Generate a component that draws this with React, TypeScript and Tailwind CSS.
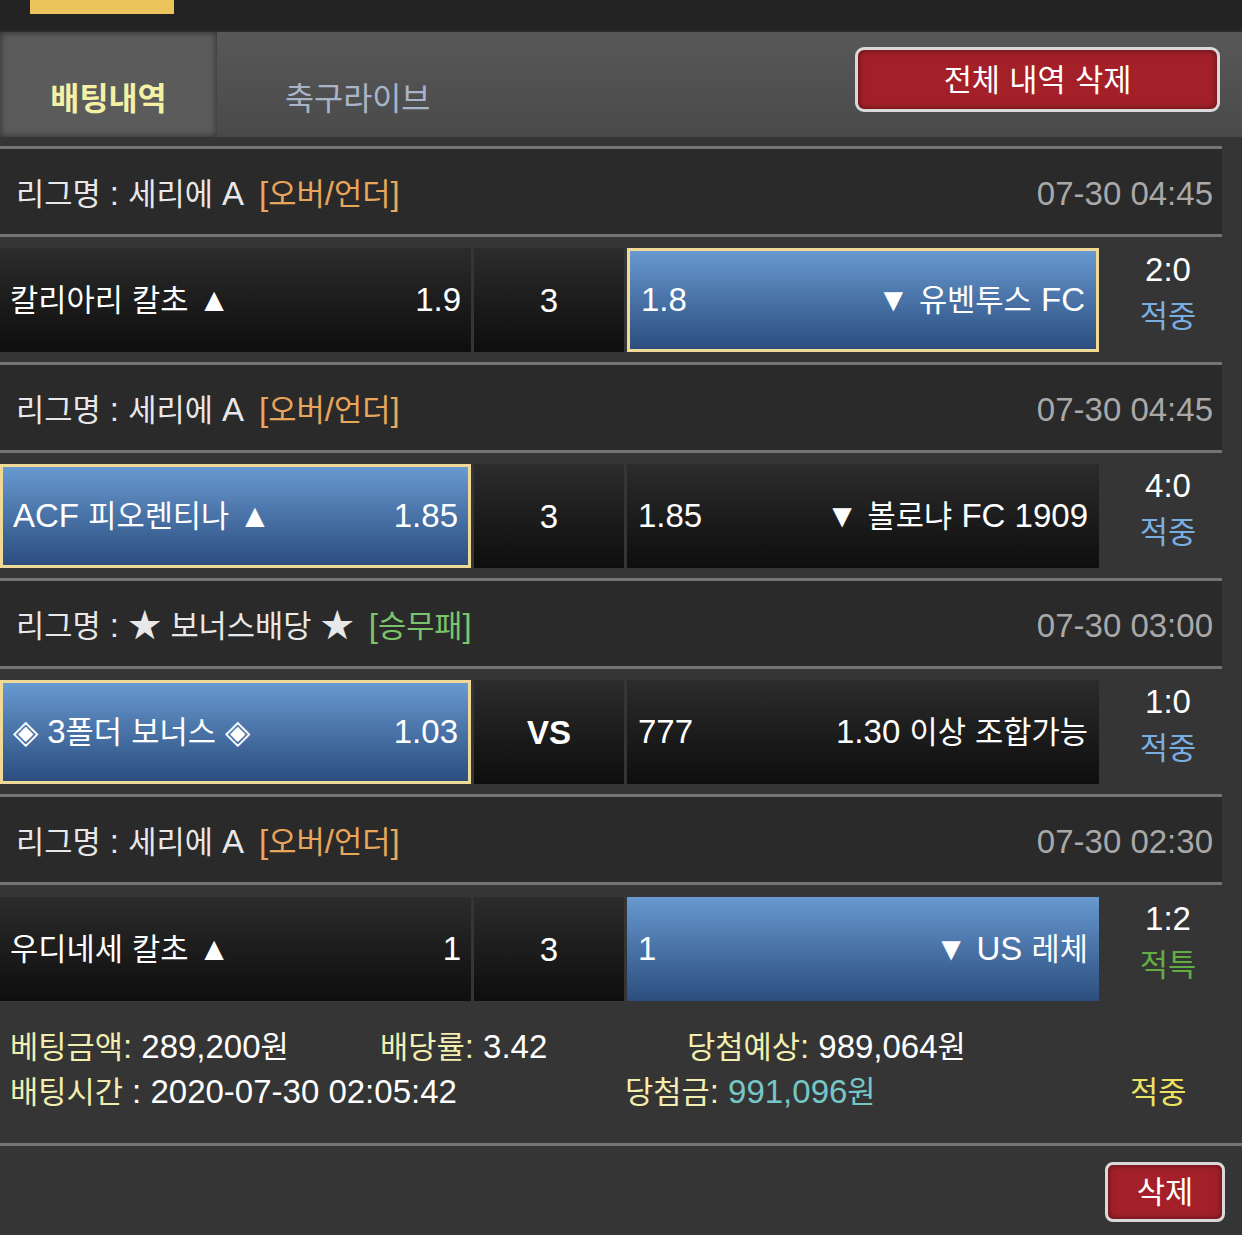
import React from "react";

const HANGUL = /([\uac00-\ud7a3]+)/;

// hangul runs get a slightly smaller size so they sit like the original system font
function T({ children }: { children: string }) {
    return (
        <span>
            {children.split(HANGUL).map((p, i) =>
                i % 2 === 1 ? <span key={i} className="text-[0.93em]">{p}</span> : <React.Fragment key={i}>{p}</React.Fragment>
            )}
        </span>
    );
}

type Bet = {
    league: string;
    tag: string;
    tagGreen?: boolean;
    time: string;
    home: string;
    homeOdds: string;
    draw: string;
    away: string;
    awayOdds: string;
    pick: "home" | "away";
    framed: boolean;
    score: string;
    result: string;
    resultGreen?: boolean;
};

const bets: Bet[] = [
    { league: "리그명 : 세리에 A", tag: "[오버/언더]", time: "07-30 04:45", home: "칼리아리 칼초 ▲", homeOdds: "1.9", draw: "3", away: "▼ 유벤투스 FC", awayOdds: "1.8", pick: "away", framed: true, score: "2:0", result: "적중" },
    { league: "리그명 : 세리에 A", tag: "[오버/언더]", time: "07-30 04:45", home: "ACF 피오렌티나 ▲", homeOdds: "1.85", draw: "3", away: "▼ 볼로냐 FC 1909", awayOdds: "1.85", pick: "home", framed: true, score: "4:0", result: "적중" },
    { league: "리그명 : ★ 보너스배당 ★", tag: "[승무패]", tagGreen: true, time: "07-30 03:00", home: "◈ 3폴더 보너스 ◈", homeOdds: "1.03", draw: "VS", away: "1.30 이상 조합가능", awayOdds: "777", pick: "home", framed: true, score: "1:0", result: "적중" },
    { league: "리그명 : 세리에 A", tag: "[오버/언더]", time: "07-30 02:30", home: "우디네세 칼초 ▲", homeOdds: "1", draw: "3", away: "▼ US 레체", awayOdds: "1", pick: "away", framed: false, score: "1:2", result: "적특", resultGreen: true },
];

function cellClass(selected: boolean, framed: boolean) {
    if (!selected) return "bg-linear-to-b from-[#2c2c2c] to-[#0e0e0e]";
    return framed
        ? "bg-linear-to-b from-[#6899d0] to-[#2c4e7f] border-[3px] border-[#f0d995]"
        : "bg-linear-to-b from-[#6899d0] to-[#2c4e7f]";
}

function Line() {
    return <div className="h-[3px] w-full bg-[#747474]" />;
}

function BetBlock({ bet, last }: { bet: Bet; last: boolean }) {
    return (
        <div>
            <Line />
            <div className="flex h-[85px] items-center justify-between bg-[#2a2a2a] pl-[16px] pr-[9px] pt-[4px]">
                <div className="text-[#e8e8e8]">
                    <T>{bet.league}</T>
                    <span className={bet.tagGreen ? "ml-[15px] text-[#7cc46a]" : "ml-[15px] text-[#e9a65a]"}>
                        <T>{bet.tag}</T>
                    </span>
                </div>
                <div className="text-[#a9a9a9]">{bet.time}</div>
            </div>
            <Line />
            <div className={last ? "flex gap-[3px] pt-[12px]" : "flex gap-[3px] pt-[11px] pb-[10px]"}>
                <div className={`flex h-[104px] w-[471px] items-center justify-between pl-[10px] pr-[10px] text-white ${cellClass(bet.pick === "home", bet.framed)}`}>
                    <T>{bet.home}</T>
                    <span>{bet.homeOdds}</span>
                </div>
                <div className={`flex h-[104px] w-[150px] items-center justify-center pt-[2px] text-white ${cellClass(false, false)} ${bet.draw === "VS" ? "font-bold" : ""}`}>
                    {bet.draw}
                </div>
                <div className={`flex h-[104px] w-[472px] items-center justify-between pl-[11px] pr-[11px] text-white ${cellClass(bet.pick === "away", bet.framed)}`}>
                    <span>{bet.awayOdds}</span>
                    <T>{bet.away}</T>
                </div>
                <div className="flex h-[104px] flex-1 flex-col items-center justify-center pb-[14px] pl-[12px] leading-[46px]">
                    <span className="text-white">{bet.score}</span>
                    <span className={bet.resultGreen ? "text-[#63ad45]" : "text-[#7aaee0]"}>
                        <T>{bet.result}</T>
                    </span>
                </div>
            </div>
        </div>
    );
}

export default function App() {
    return (
        <div className="w-[1242px] min-h-[1235px] bg-[#353535] text-[33px] font-['Liberation_Sans','Noto_Sans_CJK_KR',sans-serif]">
            <div className="h-[30px] bg-[#232323] pl-[30px]">
                <div className="h-[14px] w-[144px] bg-[#ecc45c]" />
            </div>
            <div className="h-[2px] bg-[#2c2c2c]" />
            <div className="flex h-[105px] bg-linear-to-b from-[#585858] to-[#4a4a4a]">
                <div className="flex w-[217px] items-center justify-center bg-[#5b5b5b] pt-[28px] text-[34px] font-bold text-[#f4f1a6] shadow-[inset_0_0_7px_rgba(0,0,0,0.55)]">
                    <T>배팅내역</T>
                </div>
                <div className="flex items-center pl-[68px] pt-[28px] text-[34px] text-[#a9b4c9]">
                    <T>축구라이브</T>
                </div>
                <div className="ml-auto mr-[22px] mt-[15px] flex h-[65px] w-[365px] items-center justify-center rounded-[9px] border-[3px] border-[#d9d9d9] bg-[#a32029] text-white shadow-[inset_0_0_6px_rgba(0,0,0,0.5)]">
                    <T>전체 내역 삭제</T>
                </div>
            </div>
            <div className="w-[1222px] pt-[9px]">
                {bets.map((b, i) => (
                    <BetBlock key={i} bet={b} last={i === bets.length - 1} />
                ))}
            </div>
            <div className="h-[142px] pt-[24px] leading-[44px]">
                <div className="flex pl-[10px]">
                    <span className="w-[370px]">
                        <span className="text-[#f2eeb0]"><T>베팅금액:</T></span>
                        <span className="text-white"> <T>289,200원</T></span>
                    </span>
                    <span className="w-[307px]">
                        <span className="text-[#f2eeb0]"><T>배당률:</T></span>
                        <span className="text-white"> 3.42</span>
                    </span>
                    <span>
                        <span className="text-[#f2eeb0]"><T>당첨예상:</T></span>
                        <span className="text-white"> <T>989,064원</T></span>
                    </span>
                </div>
                <div className="flex pl-[10px]">
                    <span className="w-[615px]">
                        <span className="text-[#f2eeb0]"><T>배팅시간</T></span>
                        <span className="text-white"> : 2020-07-30 02:05:42</span>
                    </span>
                    <span className="w-[505px]">
                        <span className="text-[#f2eeb0]"><T>당첨금:</T></span>
                        <span className="text-[#76c6c6]"> <T>991,096원</T></span>
                    </span>
                    <span className="text-[#ede264]"><T>적중</T></span>
                </div>
            </div>
            <Line />
            <div className="flex justify-end pr-[17px] pt-[16px]">
                <div className="flex h-[60px] w-[120px] items-center justify-center rounded-[8px] border-[3px] border-[#d9d9d9] bg-[#a32029] text-white shadow-[inset_0_0_6px_rgba(0,0,0,0.5)]">
                    <T>삭제</T>
                </div>
            </div>
        </div>
    );
}
